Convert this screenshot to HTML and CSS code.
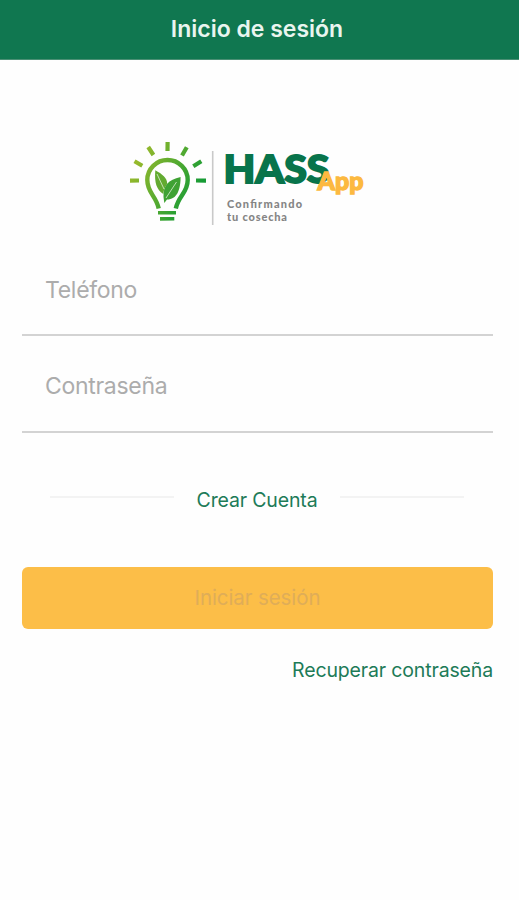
FILE: index.html
```html
<!DOCTYPE html>
<html lang="es">
<head>
<meta charset="utf-8">
<title>Inicio de sesión</title>
<link rel="stylesheet" href="styles.css">
</head>
<body>
<header class="bar"><h1 class="title">Inicio de sesión</h1></header>
<main class="content">
  <svg class="logo" viewBox="120 130 260 105" role="img" aria-label="HASS App">
    <defs>
      <linearGradient id="leafy" gradientUnits="userSpaceOnUse" x1="138" y1="160" x2="198" y2="190">
        <stop offset="0" stop-color="#96b92c"/>
        <stop offset=".5" stop-color="#58ab30"/>
        <stop offset="1" stop-color="#169b35"/>
      </linearGradient>
    </defs>
    <g fill="none" stroke="url(#leafy)" stroke-width="4.4">
      <path d="M158.700 208.500C156 195.500 147.300 193 147.300 180A20.200 20 0 0 1 187.700 180C187.700 193 178.500 195.500 175.800 208.500"/>
      <path d="M130 180.600L139 180.500M134.500 161.300L142.300 165.800M148.200 147L153.400 155M167.600 142L167.500 151M186.800 147.300L182 155.500M201.300 161.300L193.300 166.300M196 180.500L206 180.600" stroke-width="4.200"/>
      <path d="M158 212.800L176 212.700M160 218.900L174.300 218.800" stroke-width="3.600"/>
    </g>
    <path d="M155.300 170.300C162 174 167.500 178 167.200 184C165 187 164 189 163.300 194C156.500 189.500 154.300 183 155.300 170.300Z" fill="#62aa30"/>
    <path d="M180.600 177C180.500 190 177 199.500 167 199.500L164.300 203L163.500 197C163.200 186 168 179.500 180.600 177Z" fill="#3fa233"/>
    <path d="M157 174L164 189M176.500 182L166 198" fill="none" stroke="#dcefd5" stroke-width=".8"/>
    <path d="M212.700 151V225" stroke="#c9c9c9" stroke-width="1.600"/>
    <text class="brand" x="223.500" y="183" textLength="106" lengthAdjust="spacingAndGlyphs">HASS</text>
    <text class="app" x="317.500" y="190" textLength="46" lengthAdjust="spacingAndGlyphs">App</text>
    <text class="tag" x="227" y="207.500" textLength="75">Confirmando</text>
    <text class="tag" x="227" y="220.800" textLength="60">tu cosecha</text>
  </svg>
  <div class="field"><span class="label">Teléfono</span></div>
  <div class="field second"><span class="label">Contraseña</span></div>
  <div class="divider"><a class="create">Crear Cuenta</a></div>
  <button class="login"><span>Iniciar sesión</span></button>
  <a class="recover">Recuperar contraseña</a>
</main>
</body>
</html>
```
FILE: styles.css
```css
* { box-sizing: border-box; }
body {
  margin: 0;
  min-height: 900px;
  background: #fefefe;
  font-family: Inter, "Liberation Sans", sans-serif;
}
.bar {
  height: 60px;
  display: flex;
  justify-content: center;
  background: #107750;
  border-bottom: 1px solid #4a8f74;
}
.title {
  margin: 0;
  padding-right: 5px;
  font-size: 23px;
  line-height: 58px;
  font-weight: 600;
  letter-spacing: 0;
  color: #e9f5ef;
  white-space: nowrap;
}
.content {
  display: flex;
  flex-direction: column;
  padding: 70px 26px 0 22px;
}
.logo {
  width: 260px;
  height: 105px;
  margin-left: 98px;
}
.brand, .app {
  font-family: Lato, sans-serif;
  font-weight: 900;
}
.brand {
  font-size: 38.500px;
  fill: #08744b;
  stroke: #08744b;
  stroke-width: 1.8px;
}
.app {
  font-size: 24px;
  fill: #fcb940;
  stroke: #fcb940;
  stroke-width: 1.3px;
}
.tag {
  font-family: Lato, sans-serif;
  font-size: 11px;
  font-weight: 900;
  fill: #858585;
}
.field {
  height: 101px;
  padding: 41px 0 0 23px;
  border-bottom: 2px solid #d3d3d3;
}
.second {
  height: 97px;
  padding-top: 36px;
}
.label {
  display: block;
  font-size: 23px;
  line-height: 28px;
  letter-spacing: -.3px;
  color: #acacac;
}
.divider {
  display: flex;
  align-items: center;
  gap: 22px;
  height: 30px;
  margin: 51px 29px 0 28px;
}
.divider::before, .divider::after {
  content: "";
  flex: 1;
  height: 2px;
  margin-bottom: 4px;
  background: #f3f3f3;
}
.create, .recover {
  font-size: 19.500px;
  line-height: 28px;
  letter-spacing: -.15px;
  color: #1d7b58;
  white-space: nowrap;
}
.create { padding: 2px 1px 0; }
.login {
  height: 62px;
  margin: 53px 0 0;
  padding: 0;
  border: 0;
  border-radius: 6px;
  background: #fcbe48;
  font: 20.500px/62px Inter, sans-serif;
  letter-spacing: -.1px;
  color: #dfad58;
}
.recover {
  align-self: flex-end;
  margin-top: 27px;
}
```
